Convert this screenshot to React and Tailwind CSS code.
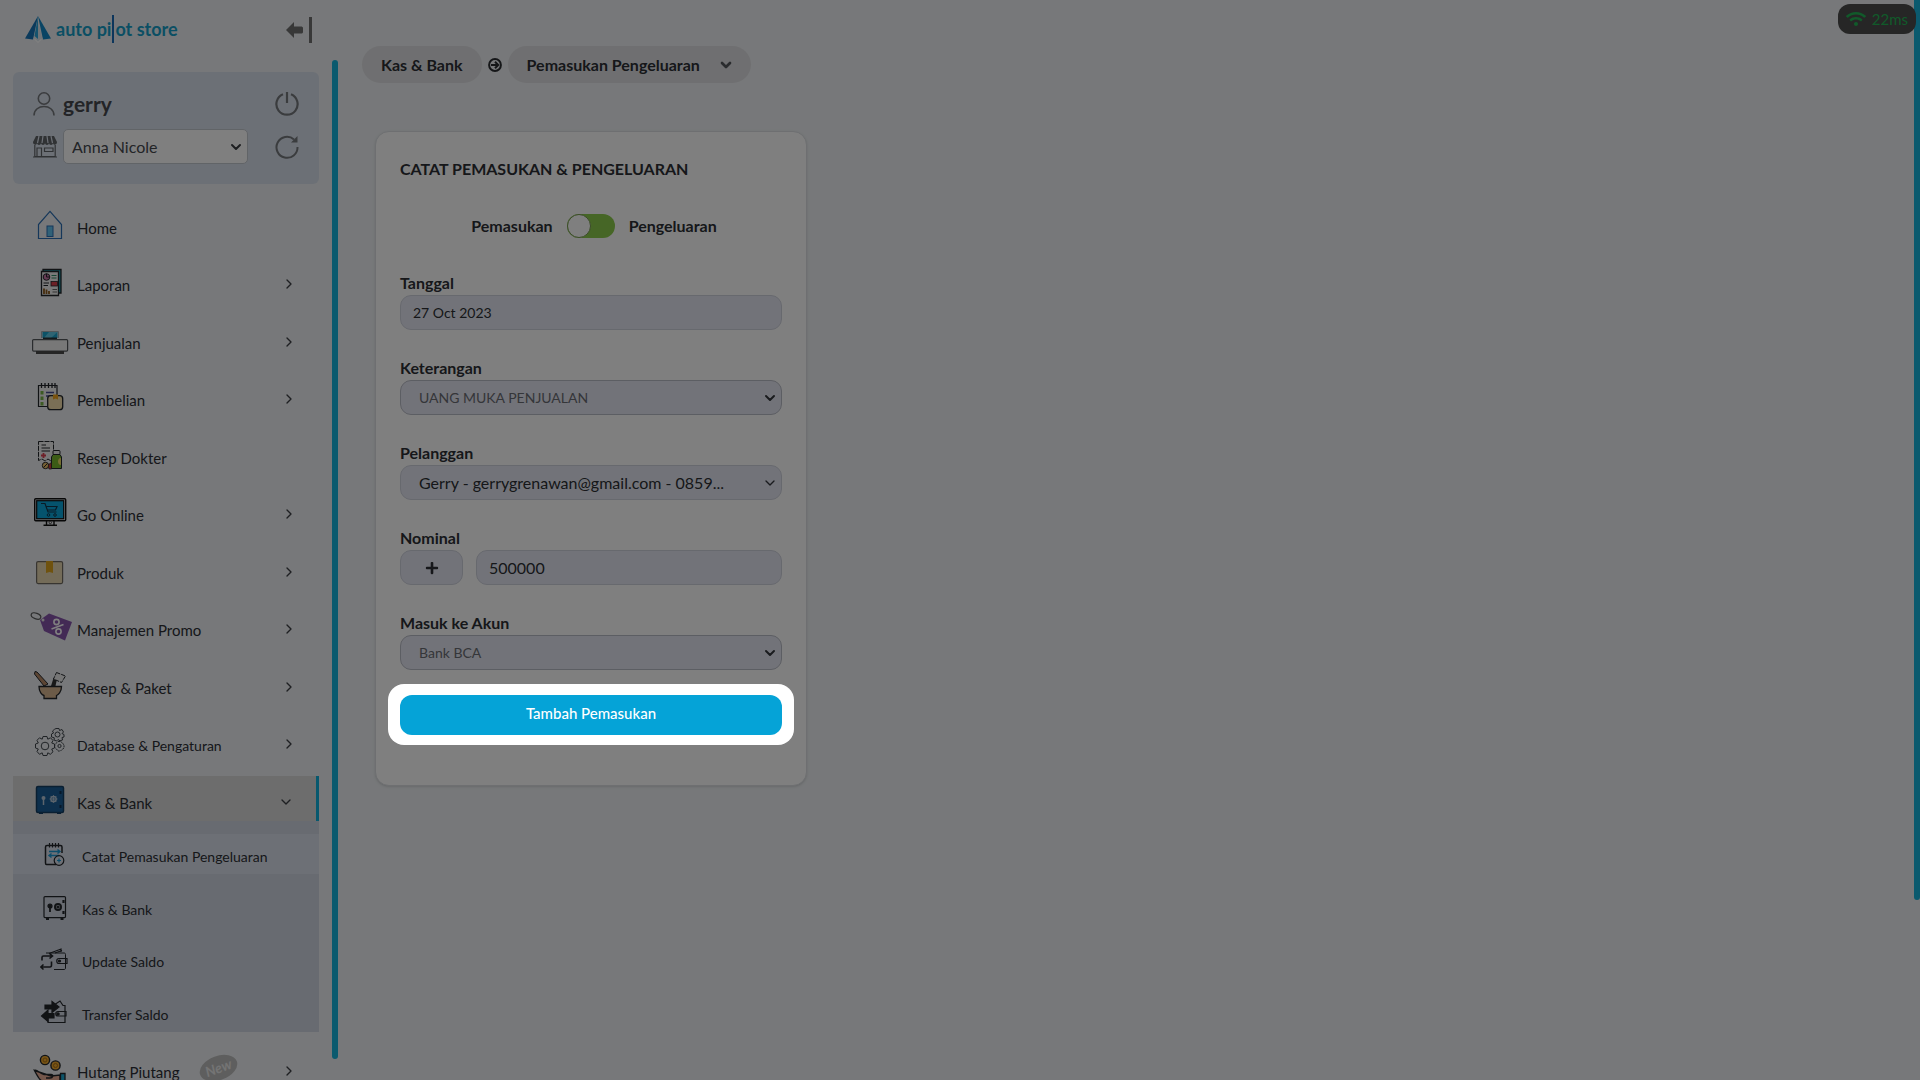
import React from "react";
import { ChevronDown, ChevronRight } from "lucide-react";
import { FaPlus, FaWifi } from "react-icons/fa";

const INK = "#23262b";

function MenuSvg({ children }) {
  return (
    <svg viewBox="0 0 44 34" className="h-[34px] w-11 shrink-0" fill="none" aria-hidden="true">
      {children}
    </svg>
  );
}

function SubSvg({ children }) {
  return (
    <svg viewBox="0 0 28 28" className="size-7 shrink-0" fill="none" stroke={INK} strokeWidth="1.2" aria-hidden="true">
      {children}
    </svg>
  );
}

const HomeIcon = () => (
  <MenuSvg>
    <path d="M9.5 17.5V31.5H32.500V17.500L21 4.300Z" stroke="#2d6fb4" strokeWidth="1.200" />
    <rect x="18" y="19" width="6" height="10.500" fill="#62c3f0" stroke="#2d6fb4" />
  </MenuSvg>
);

const ReportIcon = () => (
  <MenuSvg>
    <path d="M14 5.500H32V29H14Z" fill="#21a5b4" stroke={INK} strokeWidth="1.300" />
    <path d="M12.500 7.500H29.500V31.500H12.500Z" fill="#f2f2f2" stroke={INK} strokeWidth="1.300" />
    <circle cx="17.500" cy="13" r="3.300" fill="#c877a8" stroke={INK} />
    <path d="M17.500 9.700V13H20.800" stroke={INK} />
    <path d="M22.500 11.500H27.500M22.500 14H27.500" stroke="#2f8f68" strokeWidth="1.200" />
    <path d="M14.500 19H20M14.500 21.500H19" stroke={INK} strokeWidth="1.200" />
    <rect x="22" y="17.500" width="6.500" height="4.500" fill="#d8404c" stroke={INK} strokeWidth=".8" />
    <path d="M15 30V24.500M17.500 30V25.500M20 30V27" stroke="#8c5a1c" strokeWidth="1.800" />
    <path d="M23.500 25.500H28M23.500 28H28" stroke="#666" />
  </MenuSvg>
);

const PrinterIcon = () => (
  <MenuSvg>
    <path d="M12.500 16V9.500H29.500V16" fill="#dfe6ea" stroke="#a5adb3" />
    <path d="M13.500 10H28.500V16H13.500Z" fill="#18a5cf" />
    <path d="M20 10H28.500L22 16H15Z" fill="#5fc9e6" />
    <path d="M14 15.500H28V19H14Z" fill="#263238" />
    <rect x="3.600" y="17.600" width="35" height="11.500" rx="1" fill="#f1f1f1" stroke="#55585c" strokeWidth="1.200" />
    <path d="M7 29H35V32H7Z" fill="#4b4b4b" />
  </MenuSvg>
);

const PurchaseIcon = () => (
  <MenuSvg>
    <path d="M9.500 6.500H28V27.500H9.500Z" fill="#f2f2f2" stroke={INK} strokeWidth="1.200" />
    <path d="M12.500 4V9M16 4V9M19.500 4V9M23 4V9M26 4V9" stroke={INK} strokeWidth="1.300" />
    <path d="M13 12V27" stroke="#7ab648" strokeWidth="3" strokeDasharray="3.500 2" />
    <path d="M17 13.500H25M17 17H22" stroke="#4a4f92" strokeWidth="1.300" />
    <rect x="18.700" y="16.700" width="15" height="14" rx="3" fill="#f4dfac" stroke={INK} strokeWidth="1.300" />
    <path d="M24 15.500H29V20.500L26.500 19.500L24 20.500Z" fill="#f2a51c" />
  </MenuSvg>
);

const DoctorIcon = () => (
  <MenuSvg>
    <path d="M9.500 4.500H24.500V22L22 24L19 22L16 24L13 22L9.500 23.500Z" fill="#f0f0f0" stroke={INK} strokeDasharray="5 1" />
    <path d="M12.500 8H17M12.500 11H21M12.500 14H21" stroke={INK} />
    <path d="M14.500 16V21M12 18.500H17" stroke="#dd4051" strokeWidth="1.800" />
    <rect x="24" y="13.500" width="7" height="4" rx="1" fill="#e8e8e8" stroke={INK} />
    <path d="M24 17.500H31L32.500 20V31.500H22.500V20Z" fill="#78b82c" stroke={INK} />
    <path d="M32 21C28 21 28 28 32 28Z" fill="#eddb65" />
    <circle cx="16.500" cy="28.500" r="3.200" fill="#efc36b" stroke={INK} />
    <path d="M14.500 30.500L18.500 26.500" stroke={INK} />
    <path d="M20 32C18.500 28.500 20 26 22.500 26V32Z" fill="#c93c3c" stroke={INK} strokeWidth=".7" />
  </MenuSvg>
);

const OnlineIcon = () => (
  <MenuSvg>
    <rect x="5.700" y="4.700" width="31" height="22" rx="1" fill="#dfe4e7" stroke="#111" strokeWidth="1.400" />
    <rect x="7.700" y="6.700" width="27" height="18" fill="#0ba7da" stroke="#111" strokeWidth="1.200" />
    <path d="M12 9.500H16L19 18H27.500M17 12.500H28L26.500 16H18.500" stroke="#12344a" strokeWidth="1.200" />
    <circle cx="19.500" cy="21" r="1.300" stroke="#12344a" />
    <circle cx="26" cy="21" r="1.300" stroke="#12344a" />
    <path d="M17.500 27V31M25 27V31M14.500 31.300H28" stroke="#111" strokeWidth="1.400" />
    <circle cx="21.300" cy="28.500" r="1.200" fill="#eee" stroke="#111" strokeWidth=".7" />
  </MenuSvg>
);

const ProductIcon = () => (
  <MenuSvg>
    <rect x="7.600" y="9.600" width="26" height="22" rx="1.500" fill="#e8d8b2" stroke="#706a62" strokeWidth="1.200" />
    <path d="M17 9H24V21L20.500 20L17 21Z" fill="#dfa51d" />
  </MenuSvg>
);

const PromoIcon = () => (
  <MenuSvg>
    <ellipse cx="7" cy="7" rx="5" ry="2.800" transform="rotate(20 7 7)" stroke="#5a5a5a" strokeWidth="1.200" />
    <path d="M11 11L20 4.500L43 13L36 31.500L15 22Z" fill="#8654ab" />
    <circle cx="14" cy="11" r="1.500" fill="#e6e6e6" />
    <circle cx="27.500" cy="13" r="2.600" stroke="#fff" strokeWidth="1.600" />
    <circle cx="29.500" cy="22.500" r="2.600" stroke="#fff" strokeWidth="1.600" />
    <path d="M22.500 20L34.500 15.500" stroke="#fff" strokeWidth="1.600" />
  </MenuSvg>
);

const BowlIcon = () => (
  <MenuSvg>
    <path d="M6 4.500L8 5L19 17L15 19L5.500 7Z" fill="#b98a66" stroke={INK} />
    <path d="M22 19L24.500 11L28 12L26.500 19Z" fill="#333" />
    <path d="M27.500 5.500L36.500 9L32.500 15.500L24.500 12Z" fill="#ececec" stroke={INK} strokeDasharray="4 1" />
    <path d="M10 19.500H32.500C32.500 25 29 28 27.500 28.500V31.500H15V28.500C13 28 10 25 10 19.500Z" fill="#d9b690" stroke={INK} strokeWidth="1.300" />
  </MenuSvg>
);

const GearsIcon = () => (
  <MenuSvg>
    <g stroke="#41464d" strokeWidth="1">
      <circle cx="16" cy="22" r="3.800" />
      <path d="M14 12.500H18L18.800 15.200L21.500 13.800L24 16.500L22.700 19L25.500 20V24L22.700 25L24 27.800L21.300 30.300L18.800 28.800L18 31.500H14L13.200 28.800L10.500 30.300L8 27.500L9.300 25L6.500 24V20L9.300 19L8 16.300L10.500 13.800L13.200 15.200Z" />
      <circle cx="28.500" cy="10.500" r="2.500" />
      <path d="M27 4.500H30L30.500 6.500L33 5.500L34.500 8L33 9.500L35 10.500V13L33 13.500L33.500 16L31 16.800L29 15.500L27.500 17L25 16L25.300 13.800L22.500 13V10L24.500 9L23.500 7L25.500 5.300Z" />
      <circle cx="30.500" cy="22" r="1.600" />
      <path d="M29 17.500H32L33.500 19.500L35 20.500V24L33 25.500L31.500 27H29L27.500 25L25.800 23.500V20.500Z" strokeDasharray="2 .7" />
    </g>
  </MenuSvg>
);

const VaultIcon = () => (
  <MenuSvg>
    <path d="M10 29H14V32H10ZM28 29H32V32H28Z" fill="#123f68" />
    <rect x="7.500" y="4.500" width="27" height="26" rx="1.500" fill="#1a5f99" stroke="#143e63" strokeWidth="1.500" />
    <circle cx="14.500" cy="16" r="2" fill="#b9c9d8" />
    <path d="M14.500 17V23" stroke="#b9c9d8" strokeWidth="1.500" />
    <circle cx="24.500" cy="17" r="2.700" stroke="#b9c9d8" strokeWidth="1.300" />
    <path d="M24.500 13V21M20.500 17H28.500M21.700 14.200L27.300 19.800M27.300 14.200L21.700 19.800" stroke="#b9c9d8" strokeWidth=".8" />
    <path d="M31.500 9V12M31.500 23V26" stroke="#0f3152" strokeWidth="2" />
  </MenuSvg>
);

const HandCoinsIcon = () => (
  <MenuSvg>
    <circle cx="16" cy="9" r="4.600" fill="#f0a92b" stroke={INK} strokeWidth="1.400" />
    <circle cx="16" cy="9" r="2" stroke="#a8701a" />
    <circle cx="26.500" cy="14.500" r="4.600" fill="#f0a92b" stroke={INK} strokeWidth="1.400" />
    <circle cx="26.500" cy="14.500" r="2" stroke="#a8701a" />
    <path d="M5.500 19.500C8 18 11 23 15 23.500H22C25 23.500 24 27 21 27H17M22 25L31 24V32H18C11 31 9 26 5.500 19.500Z" fill="#eaae97" stroke={INK} strokeWidth="1.400" />
    <path d="M31.500 22.500H36V33H31.500Z" fill="#1ba9d3" stroke={INK} strokeWidth="1.300" />
  </MenuSvg>
);

const NoteIcon = () => (
  <SubSvg>
    <path d="M16 24.500H6.500C5.500 24.500 5.500 24 5.500 23V7C5.500 6 6 5.500 7 5.500H20.500C21.500 5.500 22 6 22 7V13" strokeWidth="1.500" />
    <path d="M9.500 3V7.500M12.500 3V7.500M15.500 3V7.500M18.500 3V7.500" />
    <path d="M9 11.500H20M17.500 9.500L20 11.500L17.500 13.500M19 15.500H9M11.500 13.500L9 15.500L11.500 17.500" stroke="#1b9ad6" strokeWidth="1.400" />
    <circle cx="19" cy="20.500" r="4.800" />
    <path d="M19 18.500V22.500M17 20.500H21" stroke="#1b9ad6" />
  </SubSvg>
);

const SafeIcon = () => (
  <SubSvg>
    <rect x="4" y="3.600" width="21.500" height="21" rx="1" />
    <path d="M6 26H9M20.500 26H23.500" strokeWidth="2" />
    <circle cx="10" cy="13" r="2" fill={INK} />
    <path d="M10 14V19" strokeWidth="1.800" />
    <circle cx="18" cy="14" r="3" strokeWidth="2" />
    <circle cx="18" cy="14" r="1" fill={INK} />
    <path d="M23.500 7V10M23.500 18V21" strokeWidth="2.200" />
  </SubSvg>
);

const UpdateIcon = () => (
  <SubSvg>
    <path d="M9 8.500L21 4V7M15 8L22 5.500" />
    <path d="M6 8H24C25 8 25.500 8.500 25.500 9.500V23C25.500 24 25 24.500 24 24.500H14" strokeWidth="1" />
    <path d="M27 13.500H19C16 13.500 16 18.500 19 18.500H27Z" />
    <circle cx="19.500" cy="16" r="1" fill={INK} />
    <path d="M2 15.500V12.500C2 11.500 2.500 11 3.500 11H12M9.500 8.500L12.500 11L9.500 13.500M11.500 16.500V20C11.500 21.500 11 22 10 22H1M3.500 19.500L.8 22L3.500 24.500" strokeWidth="1.600" />
  </SubSvg>
);

const TransferIcon = () => (
  <SubSvg>
    <path d="M14 7L20 3L23 7.500H25V24.500H8V20" />
    <path d="M26 13.500H18C15 13.500 15 18 18 18H26Z" />
    <circle cx="18" cy="16" r="1.200" fill={INK} />
    <path d="M5 7H12V3.500L19 9L12 14.500V11H5Z" fill={INK} />
    <path d="M14 15.500H8V12L1.500 18L8 23.500V20H14Z" fill={INK} />
  </SubSvg>
);

const MENU_TOP = [
  { label: "Home", icon: HomeIcon, leaf: true },
  { label: "Laporan", icon: ReportIcon },
  { label: "Penjualan", icon: PrinterIcon },
  { label: "Pembelian", icon: PurchaseIcon },
  { label: "Resep Dokter", icon: DoctorIcon, leaf: true },
  { label: "Go Online", icon: OnlineIcon },
  { label: "Produk", icon: ProductIcon },
  { label: "Manajemen Promo", icon: PromoIcon },
  { label: "Resep & Paket", icon: BowlIcon },
  { label: "Database & Pengaturan", icon: GearsIcon, long: true },
];

const SUBMENU = [
  { label: "Catat Pemasukan Pengeluaran", icon: NoteIcon, active: true },
  { label: "Kas & Bank", icon: SafeIcon },
  { label: "Update Saldo", icon: UpdateIcon },
  { label: "Transfer Saldo", icon: TransferIcon },
];

function MenuRow({ item }) {
  const Icon = item.icon;
  return (
    <a href="#" className="flex h-[45px] items-center pr-[22px] pl-4">
      <Icon />
      <span className={`pt-2.5 pl-1 ${item.long ? "text-[14px]" : "text-[15px]"}`}>{item.label}</span>
      {item.badge && (
        <span className="ml-5 -rotate-[20deg] rounded-[50%] bg-[#bdbdbd] px-1.5 text-sm leading-6 font-bold text-[#e8e8e8] italic">
          {item.badge}
        </span>
      )}
      {!item.leaf && <ChevronRight className="mt-1.5 ml-auto size-4 text-[#3c3f44]" />}
    </a>
  );
}

function Sidebar() {
  return (
    <aside className="flex w-[345px] shrink-0 pr-[7px]">
      <div className="flex min-w-0 flex-1 flex-col overflow-hidden px-[13px]">
        <header className="flex h-[72px] shrink-0 items-start justify-between pt-3.5 pr-[5px] pl-3">
          <a href="#" aria-label="auto pilot store" className="flex items-center text-[18px] leading-7 font-bold text-[#169fc9]">
            <svg viewBox="0 0 28 30" className="mr-[3px] h-[30px] w-7" aria-hidden="true">
              <path d="M13 2L0 24.500L8 25.500Z" fill="#1674b8" />
              <path d="M13 2L26 24.500L18 25.500Z" fill="#1289c8" />
              <path d="M13 8L8.500 25L13 28.500L17.500 25Z" fill="#dfe9f0" />
              <path d="M13 2L9.500 22L13 25Z" fill="#2ba7dc" />
              <path d="M9.500 25L13 28.500L16.500 25" fill="none" stroke="#fff" strokeWidth="1.200" />
            </svg>
            auto pi
            <span className="mx-px h-7 w-0.5 bg-[#1a6db8]" />
            ot store
          </a>
          <button aria-label="Tutup menu" className="pt-0.5">
            <svg viewBox="0 0 28 28" className="size-7" fill="#707070" aria-hidden="true">
              <path d="M0 14L8 6V10.500H15C16 10.500 17 11 17 12V16C17 17 16 17.500 15 17.500H8V22Z" />
              <path d="M23 1H26V27H23Z" />
            </svg>
          </button>
        </header>

        <section className="flex shrink-0 flex-col gap-[11px] rounded-md bg-[#d9e1ec] px-5 pt-[18px] pb-5">
          <div className="flex h-7 items-center">
            <svg viewBox="0 0 22 24" className="h-6 w-[22px]" fill="none" stroke="#75787d" strokeWidth="1.600" aria-hidden="true">
              <circle cx="11" cy="6.500" r="5.700" />
              <path d="M1 23.500C1 11.500 21 11.500 21 23.500" />
            </svg>
            <strong className="pl-2 text-[21px] text-[#46494f]">gerry</strong>
            <button aria-label="Keluar" className="ml-auto">
              <svg viewBox="0 0 24 24" className="size-6" fill="none" stroke="#75787d" strokeWidth="2.200" aria-hidden="true">
                <path d="M8 2.300A10.600 10.600 0 1 0 16 2.300M12 0V11" />
              </svg>
            </button>
          </div>
          <div className="flex items-center">
            <svg viewBox="0 0 24 22" className="h-[22px] w-6" aria-hidden="true">
              <path d="M3 0H21L24 6C24 9.500 20 9.500 20 7C20 9.500 16 9.500 16 7C16 9.500 12 9.500 12 7C12 9.500 8 9.500 8 7C8 9.500 4 9.500 4 7C4 9.500 0 9.500 0 6Z" fill="#606469" />
              <path d="M6 0L4.500 7M10 0L9 7M14 0L15 7M18 0L19.500 7" stroke="#dae1ec" strokeWidth="1.200" />
              <path d="M1.800 9V20.500H22.200V9M4 20V12H8.500V20M11.500 12H20V15.500H11.500ZM0 21H24" fill="none" stroke="#606469" strokeWidth="1.200" />
            </svg>
            <div className="relative ml-[6px] w-[185px]">
              <select aria-label="Toko" className="h-[35px] w-full appearance-none rounded-[5px] border border-[#c3c8cf] bg-white pl-2 text-base text-[#46494f]">
                <option>Anna Nicole</option>
              </select>
              <ChevronDown strokeWidth={3} className="pointer-events-none absolute top-2.5 right-1 size-4 text-[#3b3e43]" />
            </div>
            <button aria-label="Muat ulang" className="ml-auto">
              <svg viewBox="0 0 24 24" className="size-6" fill="none" stroke="#75787d" strokeWidth="2" aria-hidden="true">
                <path d="M19 4.500A10.500 10.500 0 1 0 22.500 12" />
                <path d="M22.500 1V7.500H16Z" fill="#75787d" stroke="none" />
              </svg>
            </button>
          </div>
        </section>

        <nav className="pt-[17px] text-[#2c2f34]">
          <ul>
            {MENU_TOP.map((item) => (
              <li key={item.label} className="odd:mb-3 even:mb-[13px]">
                <MenuRow item={item} />
              </li>
            ))}
            <li className="mb-[13px] bg-[#d0d7e3]">
              <a href="#" className="flex h-[45px] items-center border-r-[3px] border-[#0fb0dc] bg-[#dadada] pr-[22px] pl-4">
                <VaultIcon />
                <span className="pt-2.5 pl-1 text-[15px]">Kas &amp; Bank</span>
                <ChevronDown className="mt-1.5 ml-auto size-4 text-[#3c3f44]" />
              </a>
              <ul className="pt-[13px]">
                {SUBMENU.map(({ label, icon: Icon, active }) => (
                  <li key={label} className="odd:mb-[13px] even:mb-3 last:mb-0">
                    <a href="#" className={`flex h-10 items-center pl-[27px] text-sm ${active ? "bg-[#dbe1ec]" : ""}`}>
                      <Icon />
                      <span className="pt-1.5 pl-3.5">{label}</span>
                    </a>
                  </li>
                ))}
              </ul>
            </li>
            <li>
              <MenuRow item={{ label: "Hutang Piutang", icon: HandCoinsIcon, badge: "New" }} />
            </li>
          </ul>
        </nav>
      </div>
      <div className="mt-[60px] mb-[21px] w-1.5 rounded-full bg-[#17b4dc]" />
    </aside>
  );
}

const FIELD = "h-[35px] w-full appearance-none rounded-[11px] border border-[#cfd2dd] bg-[#e5e7f3]";
const SELECT = "h-[35px] w-full appearance-none rounded-[11px] border border-[#b9bcc6] bg-[#e5e7f3] pr-10 pl-[18px] text-sm text-[#6a6c72]";

function Field({ id, label, children }) {
  return (
    <div className="mb-[26px]">
      <label htmlFor={id} className="block h-6 text-base leading-6 font-bold">
        {label}
      </label>
      {children}
    </div>
  );
}

function SelectBox({ id, value, className, stroke }) {
  return (
    <div className="relative">
      <select id={id} className={className}>
        <option>{value}</option>
      </select>
      <ChevronDown strokeWidth={stroke} className="pointer-events-none absolute top-[10px] right-1 size-4 text-[#34373c]" />
    </div>
  );
}

function Breadcrumb() {
  return (
    <nav aria-label="Breadcrumb" className="flex h-[37px] items-center gap-1.5 text-base font-bold">
      <a href="#" className="flex h-full items-center rounded-full bg-[#dfdfe2] px-[19px]">
        Kas &amp; Bank
      </a>
      <svg viewBox="0 0 14 14" className="size-3.5" fill="none" stroke="#2b2d31" strokeWidth="2" aria-hidden="true">
        <circle cx="7" cy="7" r="5.900" />
        <path d="M3 7H10M7 3.800L10.200 7L7 10.200" />
      </svg>
      <button className="flex h-full items-center gap-[18px] rounded-full bg-[#dfdfe2] pr-[17px] pl-[19px]">
        Pemasukan Pengeluaran
        <ChevronDown strokeWidth={4} className="size-4 text-[#55585d]" />
      </button>
    </nav>
  );
}

function CashForm() {
  return (
    <form className="mt-12 ml-[13px] w-[432px] rounded-[14px] border border-[#dcdfe3] bg-white px-6 pt-[25px] pb-10 shadow-sm">
      <h1 className="text-base leading-6 font-bold">CATAT PEMASUKAN &amp; PENGELUARAN</h1>
      <div className="my-[33px] flex h-6 items-center justify-center gap-3.5 pl-1.5 text-base font-bold">
        <span>Pemasukan</span>
        <label className="relative flex h-6 w-12 items-center rounded-full bg-[#8dcc4c]">
          <input type="checkbox" aria-label="Pengeluaran" className="peer absolute inset-0 size-full cursor-pointer appearance-none" />
          <span className="pointer-events-none size-6 rounded-full border border-[#75994f] bg-white peer-checked:ml-auto" />
        </label>
        <span>Pengeluaran</span>
      </div>

      <Field id="tanggal" label="Tanggal">
        <input id="tanggal" defaultValue="27 Oct 2023" className={`${FIELD} px-3 text-sm`} />
      </Field>
      <Field id="keterangan" label="Keterangan">
        <SelectBox id="keterangan" value="UANG MUKA PENJUALAN" className={SELECT} stroke={3} />
      </Field>
      <Field id="pelanggan" label="Pelanggan">
        <SelectBox
          id="pelanggan"
          value="Gerry - gerrygrenawan@gmail.com - 0859..."
          className={`${FIELD} pr-10 pl-[18px] text-base`}
          stroke={2}
        />
      </Field>
      <Field id="nominal" label="Nominal">
        <div className="flex gap-[13px]">
          <button type="button" aria-label="Tambah" className="flex h-[35px] w-[63px] shrink-0 items-center justify-center rounded-[11px] border border-[#cfd2dd] bg-[#e5e7f3]">
            <FaPlus className="size-3.5" />
          </button>
          <input id="nominal" defaultValue="500000" className={`${FIELD} px-3 text-base`} />
        </div>
      </Field>
      <Field id="akun" label="Masuk ke Akun">
        <SelectBox id="akun" value="Bank BCA" className={SELECT} stroke={3} />
      </Field>

      <div className="relative z-50 -mx-3 -mt-3 rounded-2xl bg-white px-3 pt-[11px] pb-2.5 shadow-[0_0_0_9999px_rgba(0,0,0,0.5)]">
        <button type="button" className="h-10 w-full rounded-xl bg-[#05a3d7] pb-1 text-[15px] font-medium text-white">
          Tambah Pemasukan
        </button>
      </div>
    </form>
  );
}

export default function App() {
  return (
    <div className="h-screen bg-white">
      <div className="relative flex h-[calc(100vh-1px)] overflow-hidden bg-[#eef1f4] font-['Lato',sans-serif] text-[#2c2f34]">
        <Sidebar />
        <main className="min-w-0 flex-1 pt-[46px] pl-[17px]">
          <Breadcrumb />
          <CashForm />
        </main>
        <div className="h-5/6 w-1.5 rounded-b-full bg-[#17b4dc]" />
        <div className="absolute top-1 right-1 flex h-[30px] items-center gap-1.5 rounded-xl bg-[#4c4c4c] px-2 text-[15px] text-[#22b455]">
          <FaWifi className="size-5" />
          22ms
        </div>
      </div>
    </div>
  );
}
